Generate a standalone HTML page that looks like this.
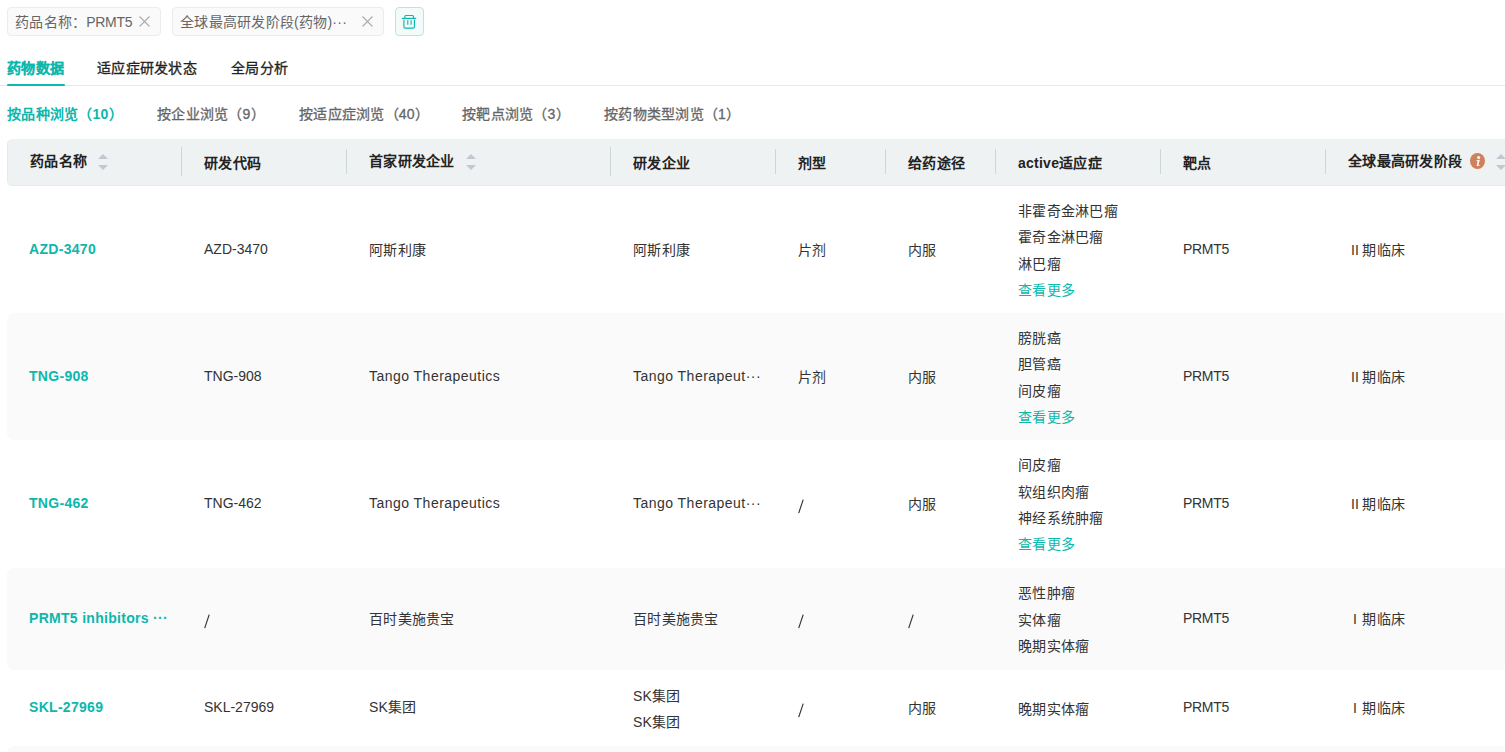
<!DOCTYPE html>
<html lang="zh-CN"><head><meta charset="utf-8"><style>
*{box-sizing:border-box;margin:0;padding:0}
html,body{width:1505px;height:752px;overflow:hidden;background:#fff}
body{font-family:"Liberation Sans",sans-serif;font-size:14px;color:#333;position:relative;letter-spacing:0.25px}
.abs{position:absolute}
.tag{position:absolute;top:7px;height:29px;border:1px solid #ececec;background:#fafafa;border-radius:4px;color:#666;white-space:nowrap}
.tag .t{position:absolute;left:7px;top:1px;line-height:27px}
.tag .x{position:absolute;top:8px;width:11px;height:11px}
.del{position:absolute;left:395px;top:7px;width:29px;height:29px;border:1px solid #b9e6e1;background:#f3fbfa;border-radius:4px}
.tab{position:absolute;top:57px;line-height:22px;color:#222;white-space:nowrap;-webkit-text-stroke:0.3px #222}
.tab.on{color:#0cb7ac;font-weight:bold;-webkit-text-stroke:0.15px #0cb7ac}
.uline{position:absolute;left:7px;top:84px;width:58px;height:2px;background:#0cb7ac;border-radius:1px}
.hr{position:absolute;left:0;top:85px;width:1505px;height:1px;background:#e8e8ef}
.sub{position:absolute;top:103px;line-height:22px;color:#666;white-space:nowrap;-webkit-text-stroke:0.3px #666}
.sub.on{color:#0cb7ac;font-weight:bold;-webkit-text-stroke:0}
.thead{position:absolute;left:7px;top:139px;width:1600px;height:47px;background:#eff2f3;border-radius:5px;border:1px solid #e7e9f3;border-top-color:#eef1f3}
.th{position:absolute;line-height:22px;font-weight:bold;color:#222;white-space:nowrap}
.dv{position:absolute;width:1px;background:#cfd6d6}
.sort{position:absolute;width:10px;height:16px}
.row{position:absolute;left:7px;width:1600px;border-radius:7px}
.row.g{background:#fafafa}
.c{position:absolute;display:flex;align-items:center;white-space:nowrap;color:#333;line-height:22px}
.c.n{color:#0cb7ac;font-weight:bold}
.ind{line-height:26.4px}
.more{color:#0cb7ac}
.l{letter-spacing:0.47px}
.lb{letter-spacing:0.3px}
.u{letter-spacing:-0.3px}
.z{letter-spacing:0}
.rn{display:inline-block;width:14.25px;text-align:center;letter-spacing:0.3px}
</style></head><body>
<div class="tag" style="left:7px;width:154px"><span class="t">药品名称：<span class="u">PRMT5</span></span><svg class="x" style="left:131px" viewBox="0 0 11 11"><path d="M0.5 0.5L10.5 10.5M10.5 0.5L0.5 10.5" stroke="#ababab" stroke-width="1.1" fill="none"/></svg></div>
<div class="tag" style="left:172px;width:212px"><span class="t">全球最高研发阶段(药物)···</span><svg class="x" style="left:189px" viewBox="0 0 11 11"><path d="M0.5 0.5L10.5 10.5M10.5 0.5L0.5 10.5" stroke="#ababab" stroke-width="1.1" fill="none"/></svg></div>
<div class="del"><svg width="29" height="29" style="position:absolute;left:-1px;top:-1px" viewBox="0 0 29 29" fill="none" stroke="#0cb7ac" stroke-width="1.15">
<path d="M6.8 11.4H21.2"/><path d="M9.8 11.4V9.5Q9.8 8.5 10.8 8.5H17.5Q18.5 8.5 18.5 9.5V11.4"/>
<path d="M8.9 12.4V19.9Q8.9 21.1 10.1 21.1H18.2Q19.4 21.1 19.4 19.9V12.4"/><path d="M12.8 13.2V17.8M16.1 13.2V17.8"/></svg></div>
<div class="tab on" style="left:7px">药物数据</div>
<div class="tab" style="left:97px">适应症研发状态</div>
<div class="tab" style="left:231px">全局分析</div>
<div class="hr"></div>
<div class="uline"></div>
<div class="sub on" style="left:7px">按品种浏览（10）</div>
<div class="sub" style="left:157px">按企业浏览（9）</div>
<div class="sub" style="left:299px">按适应症浏览（40）</div>
<div class="sub" style="left:462px">按靶点浏览（3）</div>
<div class="sub" style="left:604px">按药物类型浏览（1）</div>
<div class="thead"></div>
<div class="th" style="left:30px;top:150px">药品名称</div>
<div class="th" style="left:204px;top:151.5px">研发代码</div>
<div class="th" style="left:369px;top:150px">首家研发企业</div>
<div class="th" style="left:633px;top:151.5px">研发企业</div>
<div class="th" style="left:798px;top:151.5px">剂型</div>
<div class="th" style="left:908px;top:151.5px">给药途径</div>
<div class="th" style="left:1018px;top:151.5px">active适应症</div>
<div class="th" style="left:1183px;top:151.5px">靶点</div>
<div class="th" style="left:1348px;top:150px">全球最高研发阶段</div>
<div class="dv" style="left:181px;top:147px;height:29px"></div>
<div class="dv" style="left:346px;top:149px;height:25px"></div>
<div class="dv" style="left:610px;top:147px;height:29px"></div>
<div class="dv" style="left:775px;top:149px;height:25px"></div>
<div class="dv" style="left:885px;top:149px;height:25px"></div>
<div class="dv" style="left:995px;top:149px;height:25px"></div>
<div class="dv" style="left:1160px;top:149px;height:25px"></div>
<div class="dv" style="left:1325px;top:149px;height:25px"></div>
<svg class="sort" style="left:98px;top:154px" viewBox="0 0 10 16"><path d="M5 0L10 5H0Z M0 11H10L5 16Z" fill="#c3c7cf"/></svg>
<svg class="sort" style="left:466px;top:154px" viewBox="0 0 10 16"><path d="M5 0L10 5H0Z M0 11H10L5 16Z" fill="#c3c7cf"/></svg>
<svg class="sort" style="left:1496px;top:154px" viewBox="0 0 10 16"><path d="M5 0L10 5H0Z M0 11H10L5 16Z" fill="#c3c7cf"/></svg>
<svg class="abs" style="left:1470px;top:153px" width="15" height="16" viewBox="0 0 15 16"><ellipse cx="7.5" cy="8" rx="7.5" ry="8" fill="#d0805a"/><circle cx="8.6" cy="4.4" r="1.5" fill="#fff"/><path d="M6.6 7.2L9.9 6.8L8.5 11.3Q8.3 12.1 9.2 11.9L9.9 11.7L9.7 12.6Q8.4 13.2 7.3 13Q6.4 12.7 6.8 11.6L7.8 8.3L6.5 8.2Z" fill="#fff"/></svg>
<div class="row" style="top:186px;height:127px"></div>
<div class="c n" style="left:29px;top:185px;height:127px"><span class="lb">AZD-3470</span></div>
<div class="c" style="left:204px;top:185px;height:127px"><span class="z">AZD-3470</span></div>
<div class="c" style="left:369px;top:186px;height:127px">阿斯利康</div>
<div class="c" style="left:633px;top:186px;height:127px">阿斯利康</div>
<div class="c" style="left:798px;top:186px;height:127px">片剂</div>
<div class="c" style="left:908px;top:186px;height:127px">内服</div>
<div class="c" style="left:1018px;top:187px;height:127px"><div class="ind"><div>非霍奇金淋巴瘤</div><div>霍奇金淋巴瘤</div><div>淋巴瘤</div><div class="more">查看更多</div></div></div>
<div class="c" style="left:1183px;top:185px;height:127px"><span class="u">PRMT5</span></div>
<div class="c" style="left:1348px;top:186px;height:127px"><span class="rn">II</span>期临床</div>
<div class="row g" style="top:313px;height:127px"></div>
<div class="c n" style="left:29px;top:312px;height:127px"><span class="lb">TNG-908</span></div>
<div class="c" style="left:204px;top:312px;height:127px"><span class="z">TNG-908</span></div>
<div class="c" style="left:369px;top:312px;height:127px"><span class="l">Tango Therapeutics</span></div>
<div class="c" style="left:633px;top:312px;height:127px"><span class="l">Tango Therapeut···</span></div>
<div class="c" style="left:798px;top:313px;height:127px">片剂</div>
<div class="c" style="left:908px;top:313px;height:127px">内服</div>
<div class="c" style="left:1018px;top:314px;height:127px"><div class="ind"><div>膀胱癌</div><div>胆管癌</div><div>间皮瘤</div><div class="more">查看更多</div></div></div>
<div class="c" style="left:1183px;top:312px;height:127px"><span class="u">PRMT5</span></div>
<div class="c" style="left:1348px;top:313px;height:127px"><span class="rn">II</span>期临床</div>
<div class="row" style="top:440px;height:128px"></div>
<div class="c n" style="left:29px;top:439px;height:128px"><span class="lb">TNG-462</span></div>
<div class="c" style="left:204px;top:439px;height:128px"><span class="z">TNG-462</span></div>
<div class="c" style="left:369px;top:439px;height:128px"><span class="l">Tango Therapeutics</span></div>
<div class="c" style="left:633px;top:439px;height:128px"><span class="l">Tango Therapeut···</span></div>
<svg class="abs" style="left:798px;top:498.5px" width="8" height="15" viewBox="0 0 8 15"><path d="M0.7 14.1L5.2 0.6" stroke="#333" stroke-width="1.15" fill="none"/></svg>
<div class="c" style="left:908px;top:440px;height:128px">内服</div>
<div class="c" style="left:1018px;top:441px;height:128px"><div class="ind"><div>间皮瘤</div><div>软组织肉瘤</div><div>神经系统肿瘤</div><div class="more">查看更多</div></div></div>
<div class="c" style="left:1183px;top:439px;height:128px"><span class="u">PRMT5</span></div>
<div class="c" style="left:1348px;top:440px;height:128px"><span class="rn">II</span>期临床</div>
<div class="row g" style="top:568px;height:102px"></div>
<div class="c n" style="left:29px;top:567px;height:102px"><span class="lb">PRMT5 inhibitors ···</span></div>
<svg class="abs" style="left:204px;top:613.5px" width="8" height="15" viewBox="0 0 8 15"><path d="M0.7 14.1L5.2 0.6" stroke="#333" stroke-width="1.15" fill="none"/></svg>
<div class="c" style="left:369px;top:568px;height:102px">百时美施贵宝</div>
<div class="c" style="left:633px;top:568px;height:102px">百时美施贵宝</div>
<svg class="abs" style="left:798px;top:613.5px" width="8" height="15" viewBox="0 0 8 15"><path d="M0.7 14.1L5.2 0.6" stroke="#333" stroke-width="1.15" fill="none"/></svg>
<svg class="abs" style="left:908px;top:613.5px" width="8" height="15" viewBox="0 0 8 15"><path d="M0.7 14.1L5.2 0.6" stroke="#333" stroke-width="1.15" fill="none"/></svg>
<div class="c" style="left:1018px;top:569px;height:102px"><div class="ind"><div>恶性肿瘤</div><div>实体瘤</div><div>晚期实体瘤</div></div></div>
<div class="c" style="left:1183px;top:567px;height:102px"><span class="u">PRMT5</span></div>
<div class="c" style="left:1348px;top:568px;height:102px"><span class="rn">I</span>期临床</div>
<div class="row" style="top:670px;height:76px"></div>
<div class="c n" style="left:29px;top:669px;height:76px"><span class="lb">SKL-27969</span></div>
<div class="c" style="left:204px;top:669px;height:76px"><span class="z">SKL-27969</span></div>
<div class="c" style="left:369px;top:669px;height:76px">SK集团</div>
<div class="c" style="left:633px;top:671px;height:76px"><div class="ind"><div>SK集团</div><div>SK集团</div></div></div>
<svg class="abs" style="left:798px;top:702.5px" width="8" height="15" viewBox="0 0 8 15"><path d="M0.7 14.1L5.2 0.6" stroke="#333" stroke-width="1.15" fill="none"/></svg>
<div class="c" style="left:908px;top:670px;height:76px">内服</div>
<div class="c" style="left:1018px;top:671px;height:76px"><div class="ind"><div>晚期实体瘤</div></div></div>
<div class="c" style="left:1183px;top:669px;height:76px"><span class="u">PRMT5</span></div>
<div class="c" style="left:1348px;top:670px;height:76px"><span class="rn">I</span>期临床</div>
<div class="row g" style="top:746px;height:100px"></div>
</body></html>
